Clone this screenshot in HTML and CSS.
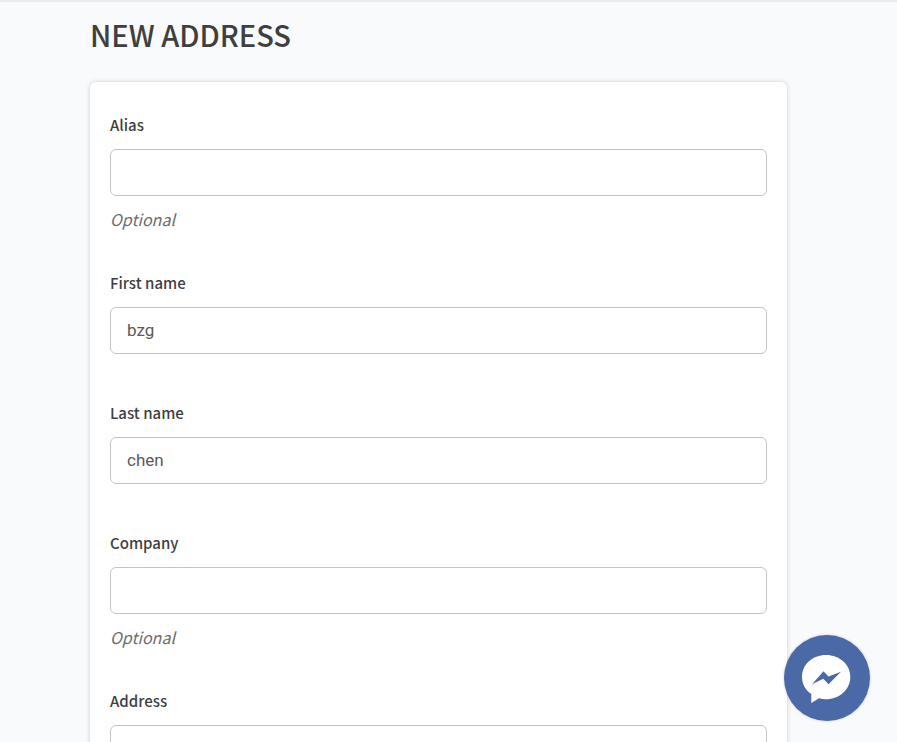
FILE: index.html
```
<!DOCTYPE html>
<html lang="en">

<head>
    <meta charset="UTF-8">
    <meta name="viewport" content="width=device-width, initial-scale=1.0">
    <title>New address</title>
    <link rel="stylesheet" href="styles.css">
</head>

<body>
    <main class="page">
        <h1>NEW ADDRESS</h1>
        <form class="card" action="/address" method="post">
            <div class="field optional">
                <label for="alias">Alias</label>
                <input type="text" id="alias" name="alias">
                <span class="hint">Optional</span>
            </div>

            <div class="field">
                <label for="firstname">First name</label>
                <input type="text" id="firstname" name="firstname" value="bzg" required>
            </div>

            <div class="field">
                <label for="lastname">Last name</label>
                <input type="text" id="lastname" name="lastname" value="chen" required>
            </div>

            <div class="field optional">
                <label for="company">Company</label>
                <input type="text" id="company" name="company">
                <span class="hint">Optional</span>
            </div>

            <div class="field">
                <label for="address">Address</label>
                <input type="text" id="address" name="address" required>
            </div>
        </form>
    </main>

    <button type="button" class="messenger" aria-label="Open chat">
        <svg viewBox="0 0 86 86" width="86" height="86" aria-hidden="true">
            <path fill="#fff" d="M42 20C28.500 20 18 29.500 18 42c0 7 3.500 13 9.300 17v9l7.700-4.700c2.300.6 4.600 1 7 1C55.500 64.300 66.300 54.500 66.300 42S55.500 20 42 20z"/>
            <path fill="#4b69a6" d="M28 49.300L39.500 36.300l5 5.200L57 36.700 44.500 49.300l-5.200-5.500z"/>
        </svg>
    </button>
</body>

</html>
```

FILE: styles.css
```
* {
    box-sizing: border-box;
}

body {
    font-family: "Noto Sans CJK SC", "Open Sans", sans-serif;
    margin: 0;
    height: 100vh;
    overflow: hidden;
    background-color: #f9fafc;
    color: #3f3f3f;
}

.page {
    border-top: 2px solid #ebeded;
    padding: 0 110px 0 90px;
}

h1 {
    margin: 0 0 28px;
    padding-top: 12px;
    font-size: 29px;
    line-height: 40px;
    font-weight: 500;
}

.card {
    background-color: #fff;
    border-radius: 6px;
    padding: 32px 20px;
    box-shadow: 0 0 5px rgba(0, 0, 0, 0.18);
}

.field {
    display: flex;
    flex-direction: column;
    margin-bottom: 48px;
}

.field.optional {
    margin-bottom: 40px;
}

label {
    margin-bottom: 13px;
    font-size: 15px;
    line-height: 22px;
    font-weight: 500;
}

input {
    width: 100%;
    height: 47px;
    padding: 0 16px 2px;
    border: 1px solid #c4c4c4;
    border-radius: 6px;
    background-color: #fff;
    color: #5a5a5a;
    font-family: Roboto, "Liberation Sans", sans-serif;
    font-size: 17px;
}

.hint {
    margin-top: 12px;
    padding-bottom: 2px;
    font-size: 16px;
    line-height: 22px;
    font-style: italic;
    color: #6c6c6c;
}

.messenger {
    position: fixed;
    right: 27px;
    bottom: 21px;
    width: 86px;
    height: 86px;
    padding: 0;
    border: 0;
    border-radius: 50%;
    background-color: #4b69a6;
    box-shadow: 0 0 3px rgba(0, 0, 0, 0.2);
    cursor: pointer;
}

.messenger svg {
    display: block;
}
```
